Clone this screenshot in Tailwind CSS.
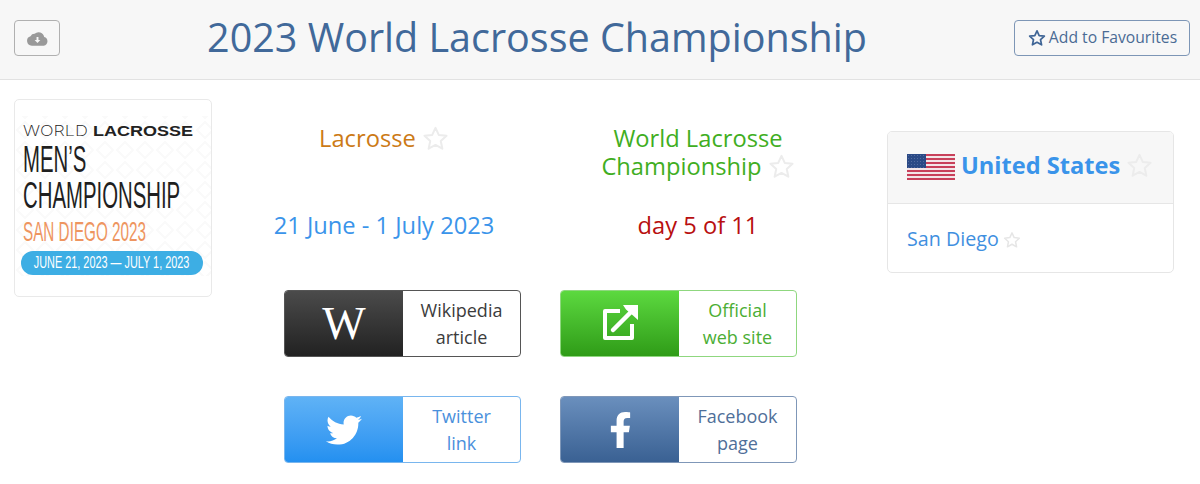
<!DOCTYPE html>
<html lang="en">
<head>
  <meta charset="UTF-8" />
  <title>2023 World Lacrosse Championship</title>
  <script src="https://cdn.jsdelivr.net/npm/@tailwindcss/browser@4"></script>
</head>
<body class="bg-white font-['Open_Sans',sans-serif] overflow-hidden">
  <!-- Header -->
  <header class="h-20 flex items-start justify-between pt-[20px] pl-[14px] pr-[10px] bg-[#f7f7f7] border-b border-[#e2e2e2]">
    <button class="w-[46px] h-[36px] flex items-center justify-center border border-[#b0b0b0] rounded-[4px]">
      <svg viewBox="0 0 22 15" class="w-[21px] h-[15px]">
        <path fill="#999999" d="M5 15a5 5 0 0 1-1.3-9.800A4.600 4.600 0 0 1 8 2.600 6 6 0 0 1 18 6a4.600 4.600 0 0 1-.5 9z" />
        <path fill="#f7f7f7" d="M10 6h2v3h2l-3 3.300L8 9h2z" />
      </svg>
    </button>
    <h1 class="text-[39.500px] leading-[48px] text-[#41699a] -mt-[7px]">2023 World Lacrosse Championship</h1>
    <button class="w-[176px] h-[36px] pl-[1px] flex items-center justify-center gap-[3px] border border-[#7d96b6] rounded-[4px] text-[15.700px] text-[#4a6b94]">
      <svg viewBox="0 0 24 24" class="w-[18px] h-[18px]"><polygon fill="none" stroke="#3f6596" stroke-width="2.300" stroke-linejoin="round" points="12,2.500 14.900,8.800 21.800,9.600 16.700,14.300 18.100,21.100 12,17.700 5.900,21.100 7.300,14.300 2.200,9.600 9.100,8.800" /></svg>
      Add to Favourites
    </button>
  </header>

  <main class="flex">
    <!-- Event logo -->
    <div class="relative ml-[14px] mt-[19px] w-[198px] h-[198px] shrink-0 border border-[#e9e9e9] rounded-[5px] overflow-hidden font-['Liberation_Sans',sans-serif] pl-[8px] pt-[22px]">
      <svg class="absolute inset-0 w-full h-full">
        <defs>
          <pattern id="diamonds" width="20" height="20" patternUnits="userSpaceOnUse">
            <path fill="none" stroke="#fafafa" stroke-width="2" d="M10 2 18 10 10 18 2 10z" />
          </pattern>
        </defs>
        <rect y="16" width="198" height="160" fill="url(#diamonds)" />
      </svg>
      <div class="relative h-[17px] whitespace-nowrap text-[15px] leading-[17px] text-[#222222] origin-left scale-x-[1.2]"><span class="font-['Inter',sans-serif] font-extralight">WORLD</span> <span class="font-bold">LACROSSE</span></div>
      <div class="relative mt-[3px] h-[72px] whitespace-nowrap text-[37px] leading-[36px] text-[#1f1f1f] origin-left scale-x-[.55]">MEN’S<br>CHAMPIONSHIP</div>
      <div class="relative mt-[2px] h-[32px] whitespace-nowrap text-[28px] leading-[32px] text-[#ee9560] origin-left scale-x-[.545]">SAN DIEGO 2023</div>
      <div class="relative mt-[3px] -ml-[2px] w-[182px] h-[24px] rounded-full bg-[#3daee4] flex justify-center items-center whitespace-nowrap text-[17px] text-white"><span class="inline-block scale-x-[.64]">JUNE 21, 2023 — JULY 1, 2023</span></div>
    </div>

    <!-- Middle -->
    <div class="ml-[15px] w-[628px] flex flex-col items-center">
      <div class="w-full grid grid-cols-2 pt-[44px] text-center text-[23.700px] leading-[28px]">
        <div class="px-4 text-[#cc7a16]">Lacrosse <svg viewBox="0 0 24 24" class="inline-block w-[27px] h-[27px] align-[-5px]"><polygon fill="none" stroke="#ececec" stroke-width="1.800" stroke-linejoin="round" points="12,2.500 14.900,8.800 21.800,9.600 16.700,14.300 18.100,21.100 12,17.700 5.900,21.100 7.300,14.300 2.200,9.600 9.100,8.800" /></svg></div>
        <div class="px-[60px] text-[#3fae22]">World Lacrosse Championship <svg viewBox="0 0 24 24" class="inline-block w-[27px] h-[27px] align-[-5px]"><polygon fill="none" stroke="#ececec" stroke-width="1.800" stroke-linejoin="round" points="12,2.500 14.900,8.800 21.800,9.600 16.700,14.300 18.100,21.100 12,17.700 5.900,21.100 7.300,14.300 2.200,9.600 9.100,8.800" /></svg></div>
      </div>
      <div class="w-full grid grid-cols-2 mt-[31px] text-center text-[23.700px] leading-[28px]">
        <div class="text-[#3a94ea]">21 June - 1 July 2023</div>
        <div class="text-[#b80f0f]">day 5 of 11</div>
      </div>

      <div class="mt-[51px] w-[514px] grid grid-cols-[237px_237px] gap-x-[39px] gap-y-[39px] text-[18px] leading-[27px] text-center">
        <a class="h-[67px] flex rounded-[4px] border border-[#555555] overflow-hidden text-[#3c3c3c]">
          <span class="w-[118px] flex items-center justify-center bg-gradient-to-b from-[#4b4b4b] to-[#222222] font-['Liberation_Serif',serif] text-[46px] text-white">W</span>
          <span class="flex-1 flex items-center justify-center">Wikipedia<br>article</span>
        </a>
        <a class="h-[67px] flex rounded-[4px] border border-[#8fd77f] overflow-hidden text-[#4bae34]">
          <span class="w-[118px] flex items-center justify-center bg-gradient-to-b from-[#5cd93f] to-[#2f9c17]">
            <svg viewBox="0 0 38 38" class="w-[38px] h-[38px] -mt-[3px] -ml-[1px]">
              <path fill="none" stroke="#ffffff" stroke-width="4" stroke-linejoin="round" d="M19 8H4v27h27V21" />
              <path fill="none" stroke="#ffffff" stroke-width="4.500" stroke-linecap="round" d="M12 27 L30 9" />
              <path fill="#ffffff" d="M22 2h15v15l-5-4.500-7-6z" />
            </svg>
          </span>
          <span class="flex-1 flex items-center justify-center">Official<br>web site</span>
        </a>
        <a class="h-[67px] flex rounded-[4px] border border-[#79b6ee] overflow-hidden text-[#4a90dc]">
          <span class="w-[118px] flex items-center justify-center bg-gradient-to-b from-[#5fb2f6] to-[#2390f0]">
            <svg viewBox="0 0 512 512" class="w-[36px] h-[36px]"><path fill="#ffffff" d="M459.37 151.716c.325 4.548.325 9.097.325 13.645 0 138.72-105.583 298.558-298.558 298.558-59.452 0-114.68-17.219-161.137-47.106 8.447.974 16.568 1.299 25.34 1.299 49.055 0 94.213-16.568 130.274-44.832-46.132-.975-84.792-31.188-98.112-72.772 6.498.974 12.995 1.624 19.818 1.624 9.421 0 18.843-1.3 27.614-3.573-48.081-9.747-84.143-51.98-84.143-102.985v-1.299c13.969 7.797 30.214 12.67 47.431 13.319-28.264-18.843-46.781-51.005-46.781-87.391 0-19.492 5.197-37.36 14.294-52.954 51.655 63.675 129.3 105.258 216.365 109.807-1.624-7.797-2.599-15.918-2.599-24.04 0-57.828 46.782-104.934 104.934-104.934 30.213 0 57.502 12.67 76.67 33.137 23.715-4.548 46.456-13.32 66.599-25.34-7.798 24.366-24.366 44.833-46.132 57.827 21.117-2.273 41.584-8.122 60.426-16.243-14.292 20.791-32.161 39.308-52.628 54.253z" /></svg>
          </span>
          <span class="flex-1 flex items-center justify-center">Twitter<br>link</span>
        </a>
        <a class="h-[67px] flex rounded-[4px] border border-[#7f97b8] overflow-hidden text-[#4f6f99]">
          <span class="w-[118px] flex items-center justify-center bg-gradient-to-b from-[#6a8fbd] to-[#3a6193]">
            <svg viewBox="0 0 320 512" class="w-[23px] h-[36px]"><path fill="#ffffff" d="M279.14 288l14.22-92.66h-88.91v-60.13c0-25.35 12.42-50.06 52.24-50.06h40.42V6.26S260.43 0 225.36 0c-73.22 0-121.08 44.38-121.08 124.72v70.62H22.89V288h81.39v224h100.17V288z" /></svg>
          </span>
          <span class="flex-1 flex items-center justify-center">Facebook<br>page</span>
        </a>
      </div>
    </div>

    <!-- Country card -->
    <div class="ml-[32px] mt-[51px] w-[287px] h-[142px] border border-[#e6e6e6] rounded-[5px] overflow-hidden">
      <div class="h-[72px] flex items-center pl-[19px] gap-[6px] bg-[#f7f7f7] border-b border-[#e6e6e6]">
        <svg viewBox="0 0 48 26" class="w-[48px] h-[26px] -mt-[2px]">
          <defs>
            <pattern id="canton" width="3" height="3" patternUnits="userSpaceOnUse">
              <circle cx="1.500" cy="1.500" r=".5" fill="#5f76a8" />
            </pattern>
          </defs>
          <rect width="48" height="26" fill="#f3e6e8" />
          <g fill="#c8405a">
            <rect y="0" width="48" height="2" />
            <rect y="4" width="48" height="2" />
            <rect y="8" width="48" height="2" />
            <rect y="12" width="48" height="2" />
            <rect y="16" width="48" height="2" />
            <rect y="20" width="48" height="2" />
            <rect y="24" width="48" height="2" />
          </g>
          <rect width="19" height="14" fill="#2b4a86" />
          <rect width="19" height="14" fill="url(#canton)" />
        </svg>
        <span class="text-[23.600px] leading-[28px] font-bold text-[#3a94ea] -mt-[6px]">United States</span>
        <svg viewBox="0 0 24 24" class="w-[27px] h-[27px] -mt-[5px]"><polygon fill="none" stroke="#ececec" stroke-width="1.800" stroke-linejoin="round" points="12,2.500 14.900,8.800 21.800,9.600 16.700,14.300 18.100,21.100 12,17.700 5.900,21.100 7.300,14.300 2.200,9.600 9.100,8.800" /></svg>
      </div>
      <div class="pl-[19px] pt-[21px] flex items-center gap-[4px] text-[19.700px] leading-[27px] text-[#3f8fe0]">
        San Diego
        <svg viewBox="0 0 24 24" class="w-[18px] h-[18px] mt-[2px]"><polygon fill="none" stroke="#e6e6e6" stroke-width="2" stroke-linejoin="round" points="12,2.500 14.900,8.800 21.800,9.600 16.700,14.300 18.100,21.100 12,17.700 5.900,21.100 7.300,14.300 2.200,9.600 9.100,8.800" /></svg>
      </div>
    </div>
  </main>
</body>
</html>
